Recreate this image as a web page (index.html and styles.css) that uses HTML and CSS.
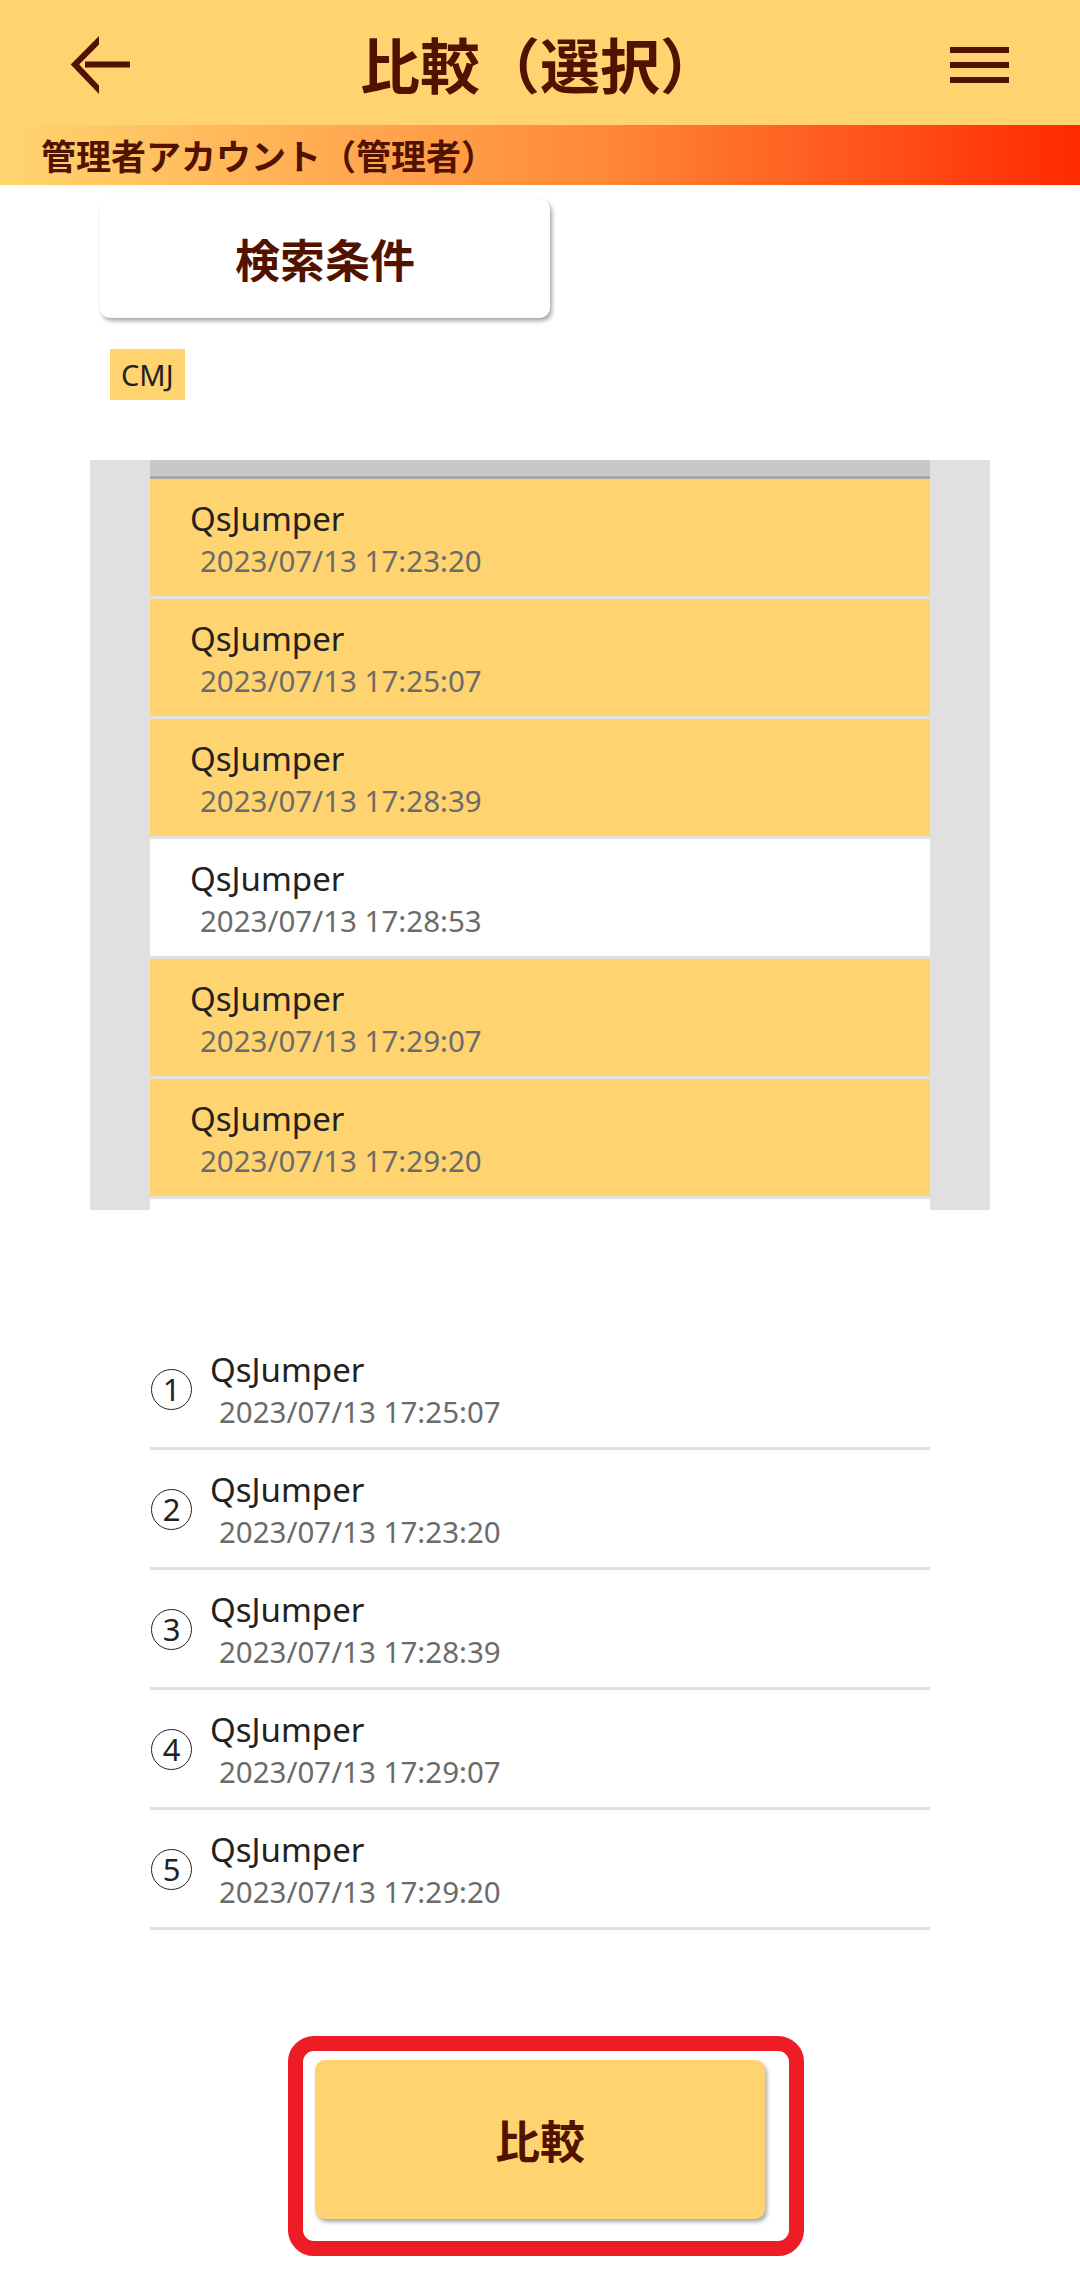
FILE: index.html
```html
<!DOCTYPE html>
<html lang="ja">
<head>
    <meta charset="UTF-8">
    <meta name="viewport" content="width=device-width, initial-scale=1.0">
    <title>比較（選択）</title>
    <link rel="stylesheet" href="styles.css">
</head>
<body>
    <header class="appbar">
        <svg class="back" width="64" height="64" viewBox="0 0 64 64">
            <polygon points="31,3 2.7,31.5 31,61 31,52.5 11.2,31.5 31,11.5" fill="#521200"/>
            <rect x="17" y="28.5" width="45" height="6" fill="#521200"/>
        </svg>
        <h1>比較（選択）</h1>
        <svg class="menu" width="59" height="36" viewBox="0 0 59 36">
            <rect x="0" y="0" width="59" height="6" fill="#521200"/>
            <rect x="0" y="15" width="59" height="6" fill="#521200"/>
            <rect x="0" y="30" width="59" height="6" fill="#521200"/>
        </svg>
    </header>
    <div class="account">管理者アカウント（管理者）</div>

    <button class="search-btn">検索条件</button>
    <div class="tags"><span class="tag">CMJ</span></div>

    <div class="picker">
        <div class="picker-list">
            <div class="picker-head"></div>
            <div class="item on"><div class="name">QsJumper</div><div class="date">2023/07/13 17:23:20</div></div>
            <div class="item on"><div class="name">QsJumper</div><div class="date">2023/07/13 17:25:07</div></div>
            <div class="item on"><div class="name">QsJumper</div><div class="date">2023/07/13 17:28:39</div></div>
            <div class="item"><div class="name">QsJumper</div><div class="date">2023/07/13 17:28:53</div></div>
            <div class="item on"><div class="name">QsJumper</div><div class="date">2023/07/13 17:29:07</div></div>
            <div class="item on"><div class="name">QsJumper</div><div class="date">2023/07/13 17:29:20</div></div>
            <div class="item"></div>
        </div>
    </div>

    <div class="chosen">
        <div class="chosen-row"><span class="num">1</span><div><div class="name">QsJumper</div><div class="date">2023/07/13 17:25:07</div></div></div>
        <div class="chosen-row"><span class="num">2</span><div><div class="name">QsJumper</div><div class="date">2023/07/13 17:23:20</div></div></div>
        <div class="chosen-row"><span class="num">3</span><div><div class="name">QsJumper</div><div class="date">2023/07/13 17:28:39</div></div></div>
        <div class="chosen-row"><span class="num">4</span><div><div class="name">QsJumper</div><div class="date">2023/07/13 17:29:07</div></div></div>
        <div class="chosen-row"><span class="num">5</span><div><div class="name">QsJumper</div><div class="date">2023/07/13 17:29:20</div></div></div>
    </div>

    <div class="compare-wrap">
        <button class="compare-btn">比較</button>
        <div class="highlight"></div>
    </div>
</body>
</html>
```

FILE: styles.css
```css
body {
    margin: 0;
    padding: 0;
    width: 1080px;
    height: 2290px;
    overflow: hidden;
    background: white;
    font-family: "Noto Sans", "Noto Sans CJK JP", sans-serif;
    color: #222;
}
.appbar {
    height: 125px;
    background-color: #ffd470;
    display: flex;
    align-items: center;
    position: relative;
}
.appbar h1 {
    flex: 1;
    margin: 0;
    text-align: center;
    font-family: "Noto Sans CJK JP", sans-serif;
    font-size: 60px;
    font-weight: bold;
    color: #521200;
    line-height: 125px;
}
.back {
    position: absolute;
    left: 68px;
    top: 33px;
}
.menu {
    position: absolute;
    right: 71px;
    top: 47px;
}
.account {
    height: 60px;
    line-height: 60px;
    padding-left: 41px;
    background: linear-gradient(to right, #ffd56f, #ff8a3a 55%, #ff2a00);
    font-family: "Noto Sans CJK JP", sans-serif;
    font-size: 35px;
    font-weight: bold;
    color: #521200;
}
.search-btn, .compare-btn {
    display: block;
    width: 450px;
    border: none;
    border-radius: 10px;
    box-shadow: 2px 3px 4px rgba(0,0,0,0.35);
    font-family: "Noto Sans CJK JP", sans-serif;
    font-size: 45px;
    font-weight: bold;
    color: #521200;
    padding: 0;
}
.search-btn {
    margin: 14px 0 0 100px;
    height: 119px;
    background: white;
}
.tags {
    margin: 31px 0 0 110px;
    display: flex;
}
.tag {
    height: 51px;
    line-height: 51px;
    padding: 0 11px;
    background: #ffd470;
    font-size: 29px;
    color: #222;
}
.picker {
    margin: 60px 0 0 90px;
    width: 900px;
    height: 750px;
    padding: 0 60px;
    box-sizing: border-box;
    background: #e0e0e0;
}
.picker-list {
    height: 100%;
    overflow: hidden;
    background: white;
}
.picker-head {
    height: 16px;
    background: #c8c8c8;
    border-bottom: 3px solid #a8a8a8;
}
.item {
    height: 120px;
    padding: 17px 0 0 40px;
    box-sizing: border-box;
    border-bottom: 3px solid #e0e0e0;
    background: white;
}
.item.on {
    background: #ffd470;
}
.name {
    font-size: 33px;
    line-height: 45px;
    color: #222;
}
.date {
    font-size: 29.5px;
    line-height: 40px;
    color: #6b6b6b;
    margin-left: 10px;
}
.chosen {
    margin: 120px 0 0 150px;
    width: 780px;
}
.chosen-row {
    height: 120px;
    box-sizing: border-box;
    padding: 17px 0 0 0;
    border-bottom: 3px solid #e0e0e0;
    display: flex;
    align-items: flex-start;
}
.num {
    width: 41px;
    height: 41px;
    margin: 22px 18px 0 1px;
    border: 1.5px solid #222;
    border-radius: 50%;
    box-sizing: border-box;
    display: flex;
    align-items: center;
    justify-content: center;
    font-size: 31px;
    line-height: 1;
    color: #222;
    flex-shrink: 0;
}
.chosen-row .date {
    margin-left: 9px;
}
.compare-wrap {
    position: relative;
    width: 450px;
    margin: 130px 0 0 315px;
}
.compare-btn {
    height: 159px;
    background: #ffd470;
}
.highlight {
    position: absolute;
    top: -24px;
    left: -27px;
    right: -39px;
    bottom: -37px;
    border: 15px solid #ee1c25;
    border-radius: 26px;
    box-sizing: border-box;
}
```
